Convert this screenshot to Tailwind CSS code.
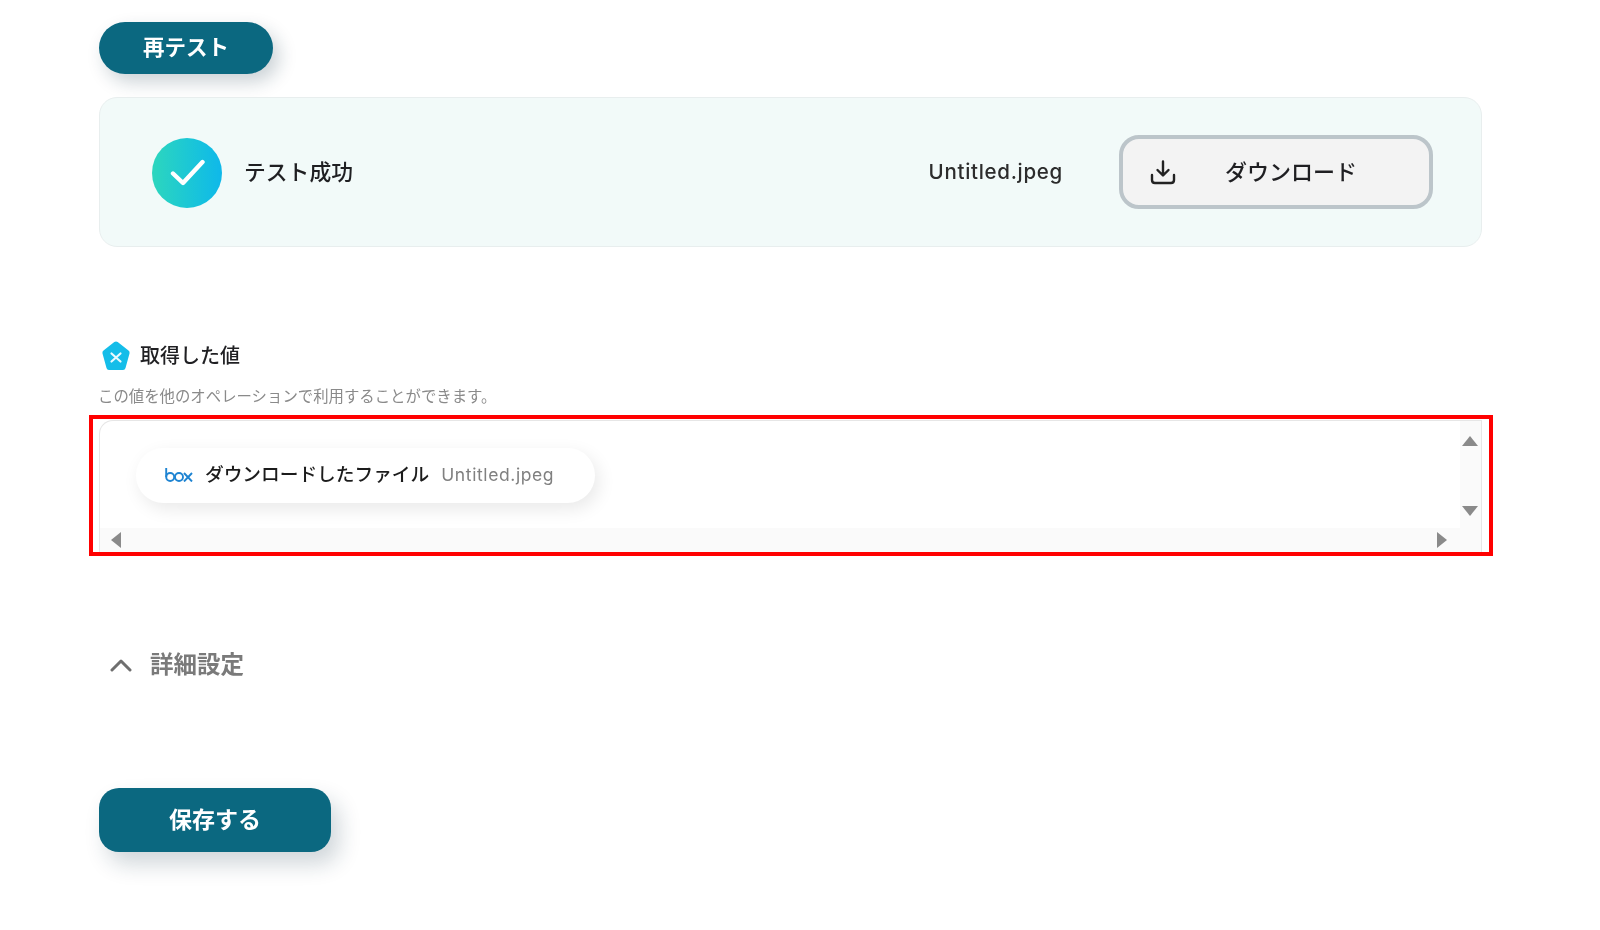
<!DOCTYPE html>
<html lang="ja">
<head>
<meta charset="utf-8">
<title>再テスト</title>
<script src="https://cdn.jsdelivr.net/npm/@tailwindcss/browser@4"></script>
</head>
<body class="bg-white overflow-hidden">
<main class="relative w-[1600px] h-[930px] pl-[99px] pr-[118px] pt-[22px] flex flex-col items-start blur-[0.4px] font-['Inter','Noto_Sans_CJK_JP',sans-serif] text-[#1f1f22]">

  <button class="w-[174px] h-[52px] shrink-0 rounded-full bg-[#0b6880] text-white text-[21.500px] font-bold pb-[2px] shadow-[6px_8px_18px_rgba(20,50,70,0.22)]">再テスト</button>

  <section class="mt-[23px] w-full h-[150px] shrink-0 rounded-[18px] bg-[#f2faf9] border border-[#e8eeee] pl-[52px] pr-[48px] flex items-center">
    <div class="mt-[1px] w-[70px] h-[70px] rounded-full bg-linear-to-r from-[#2dd6bd] to-[#0fb8ea] flex items-center justify-center">
      <svg class="ml-[2px] w-[36px] h-[30px]" viewBox="0 0 36 30" fill="none" stroke="#fff" stroke-width="4.4" stroke-linecap="round" stroke-linejoin="round"><path d="M3 15.5 L13 25 L32.500 4"/></svg>
    </div>
    <span class="ml-[22px] text-[21.800px] font-medium">テスト成功</span>
    <span class="ml-auto text-[20.500px] font-medium tracking-[0.7px] text-[#2c2c2c]">Untitled.jpeg</span>
    <button class="ml-[56px] w-[314px] h-[74px] rounded-[20px] bg-[#f3f3f3] border-[4px] border-[#bcc5ca] flex items-center pl-[27px] text-[22px] font-medium">
      <svg class="w-[26px] h-[26px] shrink-0" viewBox="0 0 26 26" fill="none" stroke="#222" stroke-width="2.400" stroke-linecap="round" stroke-linejoin="round"><path d="M13 2.500 V16 M7.500 11 L13 16.500 L18.500 11 M2 16 V21 Q2 24 5 24 H21 Q24 24 24 21 V16"/></svg>
      <span class="ml-[49px]">ダウンロード</span>
    </button>
  </section>

  <div class="mt-[94px] h-[30px] shrink-0 flex items-center">
    <svg class="ml-[3px] w-[28px] h-[30px]" viewBox="0 0 28 30" fill="none">
      <path d="M12.300 1 Q14 0 15.700 1 L26.500 9.500 Q28 10.700 27.500 12.500 L23.500 27 Q23 29 21 29 H7 Q5 29 4.500 27 L0.500 12.500 Q0 10.700 1.500 9.500 Z" fill="#14bde9"/>
      <path d="M9.500 12.500 L18.500 20.500 M18.500 12.500 L9.500 20.500" stroke="#eafaff" stroke-width="2.200" stroke-linecap="round"/>
    </svg>
    <h2 class="ml-[10px] text-[20px] font-medium">取得した値</h2>
  </div>
  <p class="mt-[15px] -ml-[1px] text-[15.400px] leading-[22px] text-[#8a8a8a]">この値を他のオペレーションで利用することができます。</p>

  <section class="mt-[12px] w-full h-[133px] shrink-0 grid grid-cols-[1fr_22px] grid-rows-[1fr_25px] rounded-tl-[14px] border-l border-t border-[#e6e6e6]">
    <div class="pl-[36px] pt-[27px]">
      <div class="w-[459px] h-[55px] rounded-full bg-white shadow-[4px_6px_18px_rgba(0,0,0,0.09)] flex items-center pl-[29px]">
        <svg class="-mt-[2px] w-[28px] h-[14px] shrink-0" viewBox="0 0 28 14" fill="none" stroke="#1f84d2" stroke-width="1.900">
          <path d="M1.200 0 V9"/><circle cx="5.200" cy="9" r="4"/><circle cx="14" cy="9" r="4"/><path d="M19 5 L27 13.500 M27 5 L19 13.500"/>
        </svg>
        <span class="ml-[12px] text-[18.700px] font-medium text-[#1c1c1c]">ダウンロードしたファイル</span>
        <span class="ml-[12px] text-[17.500px] tracking-[0.6px] text-[#808080]">Untitled.jpeg</span>
      </div>
    </div>
    <div class="row-span-2 bg-[#fafafa] border-r border-[#e6e6e6] flex flex-col items-center justify-between pt-[15px] pb-[37px] pr-[2px]">
      <span class="w-0 h-0 border-x-[8px] border-x-transparent border-b-[10px] border-b-[#8a8a8a]"></span>
      <span class="w-0 h-0 border-x-[8px] border-x-transparent border-t-[10px] border-t-[#8a8a8a]"></span>
    </div>
    <div class="bg-[#fafafa] flex items-start justify-between pl-[11px] pr-[13px] pt-[4px]">
      <span class="w-0 h-0 border-y-[8px] border-y-transparent border-r-[10px] border-r-[#8a8a8a]"></span>
      <span class="w-0 h-0 border-y-[8px] border-y-transparent border-l-[10px] border-l-[#8a8a8a]"></span>
    </div>
  </section>

  <div class="mt-[95px] h-[34px] shrink-0 flex items-center text-[#7a7a7a]">
    <svg class="ml-[11px] w-[22px] h-[14px]" viewBox="0 0 22 14" fill="none" stroke="#6f6f6f" stroke-width="3" stroke-linecap="round" stroke-linejoin="round"><path d="M2 12 L11 3 L20 12"/></svg>
    <span class="ml-[18px] text-[23.500px] font-bold">詳細設定</span>
  </div>

  <button class="mt-[106px] w-[232px] h-[64px] shrink-0 rounded-[20px] bg-[#0b6880] text-white text-[23px] font-bold shadow-[8px_12px_22px_rgba(20,50,70,0.2)]">保存する</button>

  <div class="absolute left-[89px] top-[415px] w-[1404px] h-[141px] border-[4.500px] border-[#ff0000] pointer-events-none"></div>
</main>
</body>
</html>
